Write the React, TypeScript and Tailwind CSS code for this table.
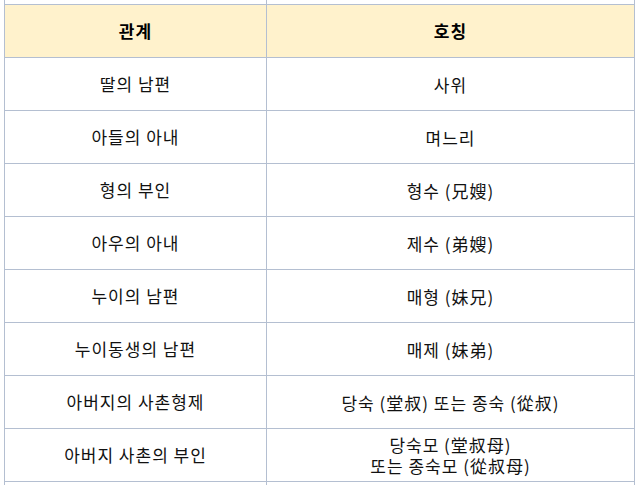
const ROWS: { rel: string; name: string[] }[] = [
  { rel: "딸의 남편", name: ["사위"] },
  { rel: "아들의 아내", name: ["며느리"] },
  { rel: "형의 부인", name: ["형수 (兄嫂)"] },
  { rel: "아우의 아내", name: ["제수 (弟嫂)"] },
  { rel: "누이의 남편", name: ["매형 (妹兄)"] },
  { rel: "누이동생의 남편", name: ["매제 (妹弟)"] },
  { rel: "아버지의 사촌형제", name: ["당숙 (堂叔) 또는 종숙 (從叔)"] },
  { rel: "아버지 사촌의 부인", name: ["당숙모 (堂叔母)", "또는 종숙모 (從叔母)"] },
];

const cell =
  "flex h-[53px] flex-col items-center justify-center border-r border-b border-[#b4bfd1] text-center";

export default function App() {
  return (
    <div
      className="h-[485px] w-[635px] overflow-hidden bg-white text-[17px] tracking-[1px] text-[#111]"
      style={{ fontFamily: '"Malgun Gothic", "Noto Sans CJK KR", "Noto Sans", sans-serif' }}
    >
      <div className="-mt-[48px] ml-[4px] grid w-[630px] grid-cols-[262px_368px] border-l border-[#b4bfd1]">
        {/* row above, cut off */}
        <div className={cell} />
        <div className={cell} />

        {/* header */}
        <div className={`${cell} bg-[#fff2cc] font-bold text-black`}>관계</div>
        <div className={`${cell} bg-[#fff2cc] font-bold text-black`}>호칭</div>

        {ROWS.map((row) => (
          <Row key={row.rel} {...row} />
        ))}

        {/* row below, cut off */}
        <div className={cell} />
        <div className={cell} />
      </div>
    </div>
  );
}

function Row({ rel, name }: { rel: string; name: string[] }) {
  return (
    <>
      <div className={cell}>{rel}</div>
      <div className={`${cell} leading-[21px]`}>
        {name.map((line) => (
          <span key={line}>{line}</span>
        ))}
      </div>
    </>
  );
}
